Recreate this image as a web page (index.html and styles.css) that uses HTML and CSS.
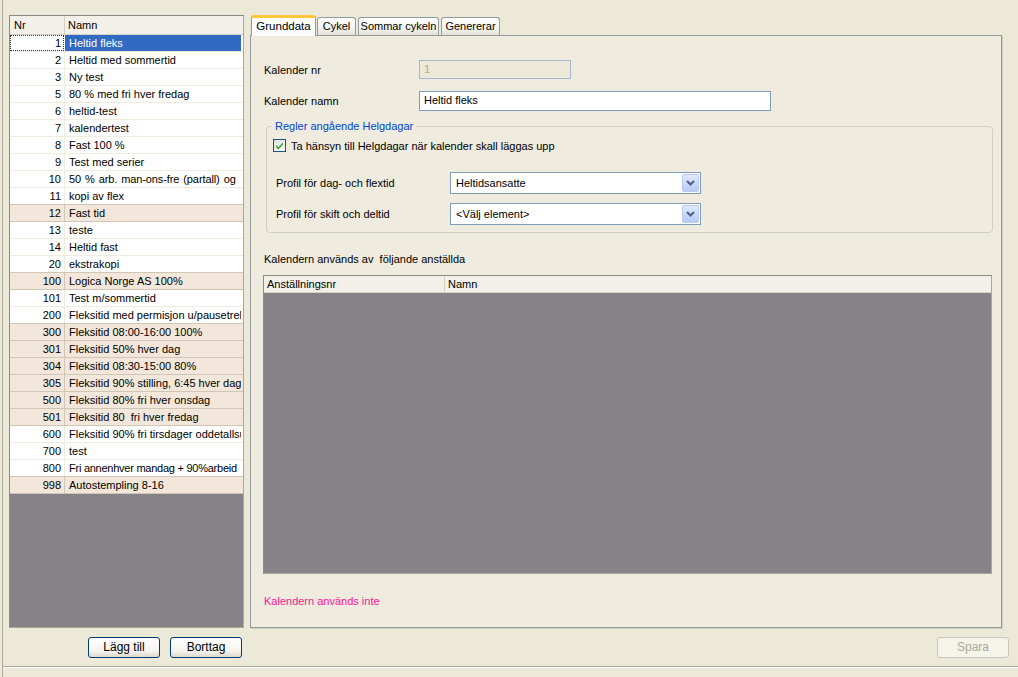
FILE: index.html
```html
<!DOCTYPE html>
<html>
<head>
<meta charset="utf-8">
<link rel="stylesheet" href="styles.css">
</head>
<body>
<div class="window">
  <div class="content">
    <div class="left">
      <div class="grid">
        <div class="ghead">
          <div class="gnr">Nr</div>
          <div class="gname">Namn</div>
        </div>
        <div class="grow sel"><div class="gnr"><span class="focus">1</span></div><div class="gname">Heltid fleks</div></div>
        <div class="grow"><div class="gnr">2</div><div class="gname">Heltid med sommertid</div></div>
        <div class="grow"><div class="gnr">3</div><div class="gname">Ny test</div></div>
        <div class="grow"><div class="gnr">5</div><div class="gname">80 % med fri hver fredag</div></div>
        <div class="grow"><div class="gnr">6</div><div class="gname">heltid-test</div></div>
        <div class="grow"><div class="gnr">7</div><div class="gname">kalendertest</div></div>
        <div class="grow"><div class="gnr">8</div><div class="gname">Fast 100 %</div></div>
        <div class="grow"><div class="gnr">9</div><div class="gname">Test med serier</div></div>
        <div class="grow"><div class="gnr">10</div><div class="gname spaced">50 % arb. man-ons-fre (partall) og</div></div>
        <div class="grow"><div class="gnr">11</div><div class="gname">kopi av flex</div></div>
        <div class="grow alt"><div class="gnr">12</div><div class="gname">Fast tid</div></div>
        <div class="grow"><div class="gnr">13</div><div class="gname">teste</div></div>
        <div class="grow"><div class="gnr">14</div><div class="gname">Heltid fast</div></div>
        <div class="grow"><div class="gnr">20</div><div class="gname">ekstrakopi</div></div>
        <div class="grow alt"><div class="gnr">100</div><div class="gname">Logica Norge AS 100%</div></div>
        <div class="grow"><div class="gnr">101</div><div class="gname">Test m/sommertid</div></div>
        <div class="grow"><div class="gnr">200</div><div class="gname">Fleksitid med permisjon u/pausetrekk</div></div>
        <div class="grow alt"><div class="gnr">300</div><div class="gname">Fleksitid 08:00-16:00 100%</div></div>
        <div class="grow alt"><div class="gnr">301</div><div class="gname">Fleksitid 50% hver dag</div></div>
        <div class="grow alt"><div class="gnr">304</div><div class="gname">Fleksitid 08:30-15:00 80%</div></div>
        <div class="grow alt"><div class="gnr">305</div><div class="gname">Fleksitid 90% stilling, 6:45 hver dag</div></div>
        <div class="grow alt"><div class="gnr">500</div><div class="gname">Fleksitid 80% fri hver onsdag</div></div>
        <div class="grow alt"><div class="gnr">501</div><div class="gname">Fleksitid 80&nbsp; fri hver fredag</div></div>
        <div class="grow"><div class="gnr">600</div><div class="gname">Fleksitid 90% fri tirsdager oddetallsuker</div></div>
        <div class="grow"><div class="gnr">700</div><div class="gname">test</div></div>
        <div class="grow"><div class="gnr">800</div><div class="gname tight">Fri annenhver mandag + 90%arbeid</div></div>
        <div class="grow alt"><div class="gnr">998</div><div class="gname">Autostempling 8-16</div></div>
        <div class="gempty"></div>
      </div>
    </div>
    <div class="tabctl">
      <div class="tabstrip">
        <div class="tab active t1">Grunddata</div>
        <div class="tab t2">Cykel</div>
        <div class="tab t3">Sommar cykeln</div>
        <div class="tab t4">Genererar</div>
      </div>
      <div class="tabpanel">
        <div class="frow first">
          <div class="flabel">Kalender nr</div>
          <div class="input disabled short">1</div>
        </div>
        <div class="frow second">
          <div class="flabel">Kalender namn</div>
          <div class="input long">Heltid fleks</div>
        </div>
        <div class="group">
          <div class="legend">Regler angående Helgdagar</div>
          <div class="chkrow">
            <span class="chk"><svg width="11" height="11" viewBox="0 0 11 11"><path d="M2 5 L4.3 7.5 L9 2.5 L9 4.6 L4.3 9.6 L2 7.1 Z" fill="#21A121"/></svg></span>
            <span>Ta hänsyn till Helgdagar när kalender skall läggas upp</span>
          </div>
          <div class="prow p1">
            <div class="plabel">Profil för dag- och flextid</div>
            <div class="select"><span class="sval">Heltidsansatte</span><span class="sbtn"><svg width="9" height="6" viewBox="0 0 9 6"><path d="M1 1 L4.5 4.5 L8 1" stroke="#4D6185" stroke-width="2" fill="none"/></svg></span></div>
          </div>
          <div class="prow p2">
            <div class="plabel">Profil för skift och deltid</div>
            <div class="select"><span class="sval">&lt;Välj element&gt;</span><span class="sbtn"><svg width="9" height="6" viewBox="0 0 9 6"><path d="M1 1 L4.5 4.5 L8 1" stroke="#4D6185" stroke-width="2" fill="none"/></svg></span></div>
          </div>
        </div>
        <div class="usedby">Kalendern används av&nbsp; följande anställda</div>
        <div class="etable">
          <div class="ehead">
            <div class="ecol1">Anställningsnr</div>
            <div class="ecol2">Namn</div>
          </div>
          <div class="ebody"></div>
        </div>
        <div class="notused">Kalendern används inte</div>
      </div>
    </div>
  </div>
  <div class="buttons">
    <div class="lbtns">
      <div class="btn">Lägg till</div>
      <div class="btn">Borttag</div>
    </div>
    <div class="btn off">Spara</div>
  </div>
  <div class="status"></div>
</div>
</body>
</html>
```
FILE: styles.css
```css
* { box-sizing: border-box; }
html, body {
  margin: 0;
  padding: 0;
  background: #ECE9D8;
  font-family: "Liberation Sans", Arial, sans-serif;
  font-size: 11px;
  color: #000;
}
.window {
  width: 1016px;
  height: 677px;
  margin-left: 2px;
  border-left: 1px solid #ACA899;
  display: flex;
  flex-direction: column;
  overflow: hidden;
}
.content {
  display: flex;
  padding: 15px 0 0 6px;
  height: 628px;
}
.left {
  width: 235px;
  height: 613px;
}
.grid {
  width: 235px;
  height: 613px;
  border: 1px solid #8C8A84;
  border-right-color: #ACA899;
  border-bottom-color: #ACA899;
  background: #fff;
  display: flex;
  flex-direction: column;
  overflow: hidden;
}
.ghead {
  display: flex;
  height: 19px;
  background: #F2F0E8;
  border-bottom: 1px solid #D6D2C2;
  flex: none;
}
.ghead .gnr {
  width: 55px;
  padding-left: 4px;
  line-height: 18px;
  border-right: 1px solid #D6D2C2;
}
.ghead .gname {
  flex: 1;
  padding-left: 3px;
  line-height: 18px;
}
.grow {
  display: flex;
  height: 17px;
  border-bottom: 1px solid #EFEBDE;
  background: #fff;
  flex: none;
  white-space: nowrap;
}
.grow .gnr {
  width: 55px;
  text-align: right;
  padding-right: 3px;
  line-height: 16px;
  border-right: 1px solid #EFEBDE;
}
.grow .gname {
  flex: 1;
  padding-left: 4px;
  line-height: 16px;
  overflow: hidden;
  margin-right: 2px;
}
.grow .gname.spaced { word-spacing: 1px; letter-spacing: -0.1px; }
.grow .gname.tight { letter-spacing: -0.25px; }
.grow.alt {
  background: #F2E7DA;
  border-bottom-color: #CFC6B6;
  box-shadow: 0 -1px 0 #CFC6B6;
}
.grow.alt .gnr { border-right-color: #CFC6B6; }
.grow.sel .gnr {
  padding: 0;
  border-right-color: #fff;
}
.grow.sel .focus {
  display: block;
  height: 16px;
  border: 1px dotted #333;
  text-align: right;
  padding-right: 2px;
  line-height: 14px;
}
.grow.sel .gname {
  background: #316AC5;
  color: #fff;
}
.gempty {
  flex: 1;
  background: #858388;
}
.tabctl {
  margin-left: 6px;
  width: 752px;
  display: flex;
  flex-direction: column;
}
.tabstrip {
  display: flex;
  align-items: flex-end;
  height: 20px;
  padding-left: 1px;
  position: relative;
  z-index: 1;
}
.tab {
  height: 18px;
  margin-right: 2px;
  border: 1px solid #919B9C;
  border-bottom: none;
  border-radius: 3px 3px 0 0;
  background: linear-gradient(#FFFFFF, #F3F2EC 60%, #E4E2D8);
  font-size: 11px;
  line-height: 17px;
  text-align: center;
  white-space: nowrap;
}
.tab.t1 { width: 65px; }
.tab.t2 { width: 39px; }
.tab.t3 { width: 81px; }
.tab.t4 { width: 59px; }
.tab.active {
  height: 21px;
  margin-right: 1px;
  margin-bottom: -1px;
  background: #FCFCFE;
  border-top: 3px solid #FFC83C;
  line-height: 16px;
  font-size: 11.5px;
}
.tabpanel {
  flex: 1;
  border: 1px solid #919B9C;
  background: #EFEBDF;
  box-shadow: 1px 1px 0 #D0CEBF;
  display: flex;
  flex-direction: column;
  padding: 0 0 0 12px;
}
.frow {
  display: flex;
  align-items: center;
}
.frow.first { margin-top: 24px; }
.frow.second { margin-top: 12px; }
.flabel { width: 156px; padding-left: 1px; }
.input {
  height: 19px;
  border: 1px solid #7F9DB9;
  background: #fff;
  line-height: 17px;
  padding-left: 4px;
}
.input.disabled {
  background: #ECE9D8;
  color: #ACA899;
  border-color: #A4B7CB;
}
.input.short { width: 152px; }
.input.long { width: 352px; height: 20px; }
.group {
  margin: 15px 8px 0 3px;
  height: 107px;
  border: 1px solid #D0D0BF;
  border-radius: 4px;
  position: relative;
  padding: 12px 0 0 6px;
}
.legend {
  position: absolute;
  left: 5px;
  top: -8px;
  padding: 0 3px 0 3px;
  background: #EFEBDF;
  color: #0046D5;
  line-height: 14px;
}
.chkrow {
  display: flex;
  align-items: center;
  gap: 5px;
}
.chk {
  width: 13px;
  height: 13px;
  border: 1px solid #1C5180;
  background: linear-gradient(135deg, #DCDCD7, #FFFFFF);
  display: flex;
  align-items: center;
  justify-content: center;
}
.prow {
  display: flex;
  align-items: center;
}
.prow.p1 { margin-top: 20px; }
.prow.p2 { margin-top: 9px; }
.plabel { width: 177px; padding-left: 3px; }
.select {
  width: 251px;
  height: 22px;
  border: 1px solid #7F9DB9;
  background: #fff;
  display: flex;
  align-items: center;
  padding: 1px;
}
.sval { flex: 1; padding-left: 4px; }
.sbtn {
  width: 17px;
  height: 18px;
  border: 1px solid #B9C9EF;
  border-radius: 2px;
  background: linear-gradient(#E0E9FE, #B8CBF7);
  display: flex;
  align-items: center;
  justify-content: center;
}
.usedby {
  margin-top: 19px;
  padding-left: 1px;
  line-height: 14px;
}
.etable {
  margin-top: 9px;
  width: 729px;
  height: 299px;
  border: 1px solid #ACA899;
  border-top-color: #8C8A84;
  border-left-color: #8C8A84;
  display: flex;
  flex-direction: column;
}
.ehead {
  display: flex;
  height: 17px;
  background: #F2F0E8;
  border-bottom: 1px solid #D6D2C2;
  flex: none;
}
.ecol1 {
  width: 181px;
  padding-left: 3px;
  line-height: 16px;
  border-right: 1px solid #D6D2C2;
}
.ecol2 {
  flex: 1;
  padding-left: 3px;
  line-height: 16px;
}
.ebody {
  flex: 1;
  background: #858388;
}
.notused {
  margin-top: 20px;
  padding-left: 1px;
  color: #FF1493;
  line-height: 14px;
}
.buttons {
  display: flex;
  justify-content: space-between;
  height: 21px;
  margin-top: 9px;
  padding: 0 9px 0 85px;
}
.lbtns {
  display: flex;
  gap: 10px;
}
.btn {
  width: 72px;
  height: 21px;
  border: 1px solid #003C74;
  border-radius: 3px;
  background: linear-gradient(#FFFFFF, #F4F3EE 70%, #DCD8CA);
  text-align: center;
  line-height: 19px;
  font-size: 12px;
}
.btn.off {
  border-color: #C9C7BA;
  background: #F5F4EA;
  color: #ACA899;
}
.status {
  margin-top: 8px;
  flex: 1;
  border-top: 1px solid #ACA899;
  box-shadow: inset 0 1px 0 #FFFFFF;
  background: #ECE9D8;
}
```
